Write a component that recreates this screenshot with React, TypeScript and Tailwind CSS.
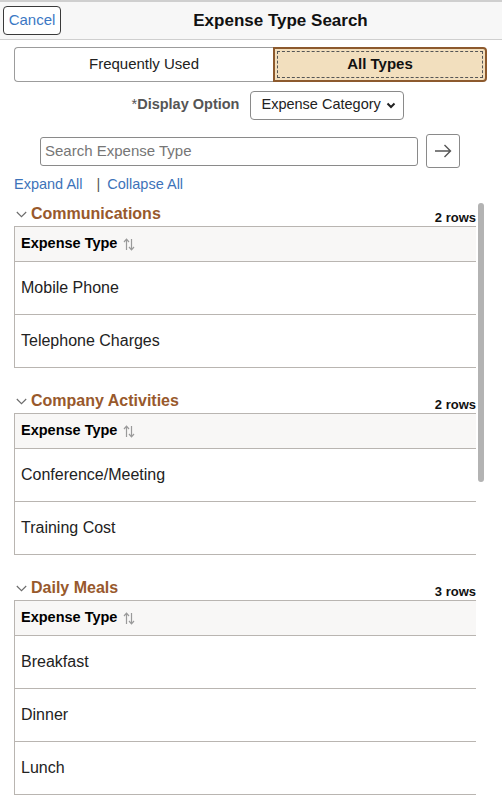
import React from "react";

function Chevron() {
  return (
    <svg width="11" height="7" viewBox="0 0 11 7" className="ml-[2px] mr-[4px] mb-[5px]">
      <path d="M0.8 1 L5.5 5.7 L10.2 1" fill="none" stroke="#6b6b6b" strokeWidth="1.1" />
    </svg>
  );
}

function SortIcon() {
  return (
    <svg width="12" height="13" viewBox="0 0 12 13" className="ml-[6px]">
      <path d="M3.5 12 V1.5 M1 4 L3.5 1.2 L6 4" fill="none" stroke="#9a9a9a" strokeWidth="1.2" />
      <path d="M8.5 1 V11.5 M6 9 L8.5 11.8 L11 9" fill="none" stroke="#9a9a9a" strokeWidth="1.2" />
    </svg>
  );
}

function Section({ title, rows }: { title: string; rows: string[] }) {
  return (
    <div>
      <div className="flex items-end justify-between h-[26px]">
        <div className="flex items-end pb-[3px]">
          <Chevron />
          <span className="text-[16px] leading-[18px] font-bold text-[#98592c]">{title}</span>
        </div>
        <span className="text-[13px] leading-[16px] font-bold text-[#111]">{rows.length} rows</span>
      </div>
      <div className="border-l border-t border-b border-[#b9b5b1]">
        <div className="h-[35px] bg-[#f8f7f6] border-b border-[#b9b5b1] flex items-center pl-[6px]">
          <span className="text-[14.5px] font-bold text-black">Expense Type</span>
          <SortIcon />
        </div>
        {rows.map((r, i) => (
          <div
            key={r}
            className={`flex items-center pl-[6px] text-[16px] text-[#222] ${i < rows.length - 1 ? "h-[53px] border-b border-[#b9b5b1]" : "h-[52px]"}`}
          >
            {r}
          </div>
        ))}
      </div>
    </div>
  );
}

export default function App() {
  return (
    <div className="w-[502px] h-[802px] overflow-hidden bg-white font-['Liberation_Sans',Arial,sans-serif] text-[#222]">
      {/* Header */}
      <div className="h-[40px] border-t-2 border-t-[#cfcfcf] border-b border-b-[#cfcfcf] bg-[#f7f7f7] flex items-center">
        <button className="ml-[3px] h-[29px] w-[58px] border border-[#3a3a3a] rounded-[4px] bg-white text-[15px] text-[#3b78c4] flex items-center justify-center">
          Cancel
        </button>
        <div className="flex-1 text-center text-[17px] font-bold text-[#111] pr-[2px]">Expense Type Search</div>
      </div>

      {/* Segmented */}
      <div className="mt-[7px] mx-[14px] mr-[15px] h-[35px] flex">
        <div className="flex-1 border border-r-0 border-[#9c9c9c] rounded-l-[4px] flex items-center justify-center text-[15px] text-[#222]">
          Frequently Used
        </div>
        <div className="w-[214px] border-2 border-[#8d5a2e] rounded-r-[4px] bg-[#f2dfbe] p-[2px]">
          <div className="h-full border border-dashed border-[#555] flex items-center justify-center text-[15px] font-bold text-[#111]">
            All Types
          </div>
        </div>
      </div>

      {/* Display option */}
      <div className="mt-[8px] h-[30px] flex items-center justify-center pl-[34px]">
        <span className="text-[14.5px] text-[#555]">*</span>
        <span className="text-[14.5px] font-bold text-[#555]">Display Option</span>
        <div className="ml-[11px] w-[154px] h-[29px] border border-[#8a8a8a] rounded-[4px] flex items-center justify-between pl-[10px] pr-[7px] text-[14.5px] text-[#222]">
          <span>Expense Category</span>
          <svg width="10" height="7" viewBox="0 0 10 7">
            <path d="M1.5 1.5 L5 5 L8.5 1.5" fill="none" stroke="#222" strokeWidth="2" />
          </svg>
        </div>
      </div>

      {/* Search */}
      <div className="mt-[14px] flex items-center justify-center gap-[8px] pr-[2px]">
        <div className="w-[378px] h-[29px] border border-[#8a8a8a] rounded-[3px] flex items-center pl-[4px] text-[15px] text-[#767676]">
          Search Expense Type
        </div>
        <div className="w-[34px] h-[34px] border border-[#8a8a8a] rounded-[3px] flex items-center justify-center">
          <svg width="18" height="14" viewBox="0 0 18 14">
            <path d="M1 7 H16.5 M10.5 1 L16.5 7 L10.5 13" fill="none" stroke="#555" strokeWidth="1.4" />
          </svg>
        </div>
      </div>

      {/* Expand / Collapse */}
      <div className="mt-[8px] ml-[14px] flex items-center text-[14.5px] text-[#3d73b9] h-[18px]">
        <span>Expand All</span>
        <span className="ml-[14px] text-[#555]">|</span>
        <span className="ml-[7px]">Collapse All</span>
      </div>

      {/* Scroll area */}
      <div className="relative mt-[6px] pl-[14px] pr-[26px]">
        <div className="absolute left-[478px] top-[3px] w-[6px] h-[279px] rounded-full bg-[#b3b3b3]" />
        <div className="flex flex-col gap-[19px]">
          <Section title="Communications" rows={["Mobile Phone", "Telephone Charges"]} />
          <Section title="Company Activities" rows={["Conference/Meeting", "Training Cost"]} />
          <Section title="Daily Meals" rows={["Breakfast", "Dinner", "Lunch"]} />
        </div>
      </div>
    </div>
  );
}
